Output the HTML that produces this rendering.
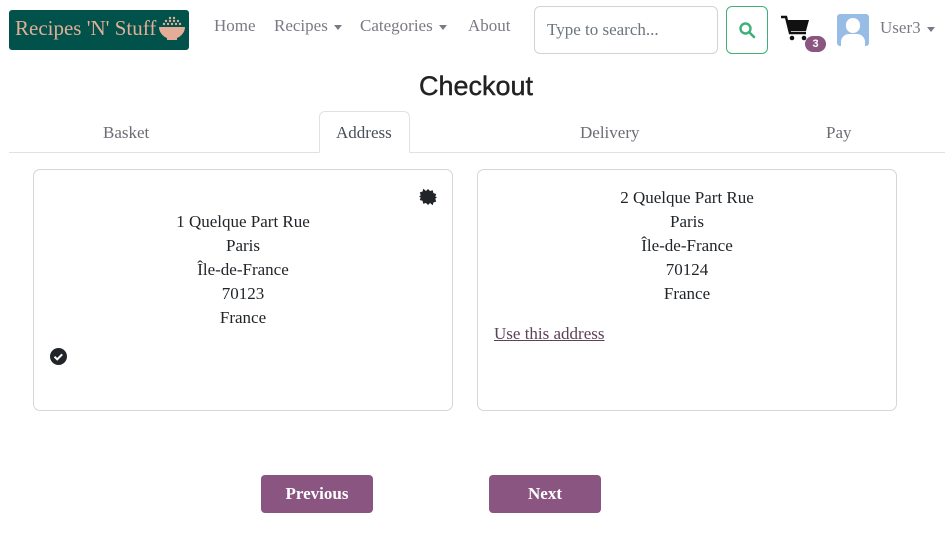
<!DOCTYPE html>
<html><head><style>
*{margin:0;padding:0;box-sizing:border-box}
body{width:952px;height:534px;background:#fff;font-family:"Liberation Serif",serif;color:#212529;position:relative;overflow:hidden;font-size:16px}
.a{position:absolute}
.nav{color:#7a7a85;font-size:17px;top:16px}
.car{display:inline-block;border-left:4px solid transparent;border-right:4px solid transparent;border-top:5px solid #7a7a85;vertical-align:middle;margin-left:6px}
.card{border:1px solid #d6d6d6;border-radius:7px;top:169px;width:420px;height:242px}
.addr{text-align:center;line-height:24px;font-size:17px}
.btn{background:#8b5581;color:#fff;border-radius:4px;width:112px;height:38px;top:475px;text-align:center;line-height:38px;font-size:17px;font-weight:bold}
.tab{top:123px;font-size:17px;color:#6c6c75}
</style></head><body>
<div class="a" style="left:9px;top:10px;width:180px;height:40px;background:#00524a;border-radius:3px"></div>
<div class="a" style="left:15px;top:16px;color:#e3ad97;font-size:21px">Recipes 'N' Stuff</div>
<svg class="a" style="left:159px;top:15px" width="26" height="28" viewBox="0 0 26 28"><g fill="#e3ad97"><circle cx="11" cy="3" r="1.2"/><circle cx="15" cy="3" r="1.2"/><circle cx="7" cy="6" r="1.2"/><circle cx="11" cy="6" r="1.2"/><circle cx="15" cy="6" r="1.2"/><circle cx="19" cy="6" r="1.2"/><circle cx="5" cy="9" r="1.2"/><circle cx="9" cy="9" r="1.2"/><circle cx="13" cy="9" r="1.2"/><circle cx="17" cy="9" r="1.2"/><circle cx="21" cy="9" r="1.2"/><path d="M0 12h26c0 6-5 10-8 11v2H8v-2C5 22 0 18 0 12z"/></g></svg>
<div class="a nav" style="left:214px">Home</div>
<div class="a nav" style="left:274px">Recipes<span class="car"></span></div>
<div class="a nav" style="left:360px">Categories<span class="car"></span></div>
<div class="a nav" style="left:468px">About</div>
<div class="a" style="left:534px;top:6px;width:184px;height:48px;border:1px solid #ced4da;border-radius:6px;padding:13px 12px;color:#6c757d;font-size:17px">Type to search...</div>
<div class="a" style="left:726px;top:6px;width:42px;height:48px;border:1px solid #3eb07a;border-radius:6px"></div>
<svg class="a" style="left:738px;top:21px" width="18" height="18" viewBox="0 0 18 18"><circle cx="7.5" cy="7.5" r="5" fill="none" stroke="#3eb07a" stroke-width="2.4"/><path d="M11 11l5 5" stroke="#3eb07a" stroke-width="2.6" stroke-linecap="round"/></svg>
<svg class="a" style="left:781px;top:15px" width="30" height="28" viewBox="0 0 30 28"><path d="M0 2h5l4 16h16" fill="none" stroke="#111" stroke-width="2.5"/><path d="M6 5h22l-3 11H9z" fill="#111"/><circle cx="11" cy="23" r="2.3" fill="#111"/><circle cx="23" cy="23" r="2.3" fill="#111"/></svg>
<div class="a" style="left:805px;top:36px;width:21px;height:16px;border-radius:8px;background:#8b5581;color:#fff;font-family:'Liberation Sans',sans-serif;font-weight:bold;font-size:11px;text-align:center;line-height:16px">3</div>
<div class="a" style="left:837px;top:14px;width:32px;height:32px;background:#97bde6;border-radius:3px;overflow:hidden">
<div class="a" style="left:9px;top:4px;width:14px;height:15px;border-radius:7px;background:#fff"></div>
<div class="a" style="left:4px;top:20px;width:24px;height:16px;border-radius:8px 8px 0 0;background:#fff"></div></div>
<div class="a nav" style="left:880px;top:18px">User3<span class="car"></span></div>
<div class="a" style="left:0;width:952px;top:71px;text-align:center;font-family:'Liberation Sans',sans-serif;font-size:27px;color:#222;-webkit-text-stroke:0.4px #222">Checkout</div>
<div class="a" style="left:9px;top:152px;width:936px;height:1px;background:#dee2e6"></div>
<div class="a" style="left:319px;top:111px;width:91px;height:42px;border:1px solid #dee2e6;border-bottom:1px solid #fff;border-radius:6px 6px 0 0;background:#fff"></div>
<div class="a tab" style="left:103px">Basket</div>
<div class="a tab" style="left:336px;color:#495057">Address</div>
<div class="a tab" style="left:580px">Delivery</div>
<div class="a tab" style="left:826px">Pay</div>
<div class="a card" style="left:33px"></div>
<div class="a card" style="left:477px"></div>
<svg class="a" style="left:419px;top:188px" width="18" height="18" viewBox="0 0 18 18"><path d="M9 1l2 2 2.8-.7.6 2.8 2.8.9-.9 2.8L18 9l-1.7 1.8.9 2.8-2.8.9-.6 2.8L11 15l-2 2-2-2-2.8.7-.6-2.8-2.8-.9.9-2.8L0 9l1.7-1.8-.9-2.8 2.8-.9.6-2.8L7 3z" fill="#212529"/></svg>
<div class="a addr" style="left:33px;width:420px;top:210px">1 Quelque Part Rue<br>Paris<br>Île-de-France<br>70123<br>France</div>
<svg class="a" style="left:50px;top:348px" width="17" height="17" viewBox="0 0 17 17"><circle cx="8.5" cy="8.5" r="8.5" fill="#212529"/><path d="M4.5 8.7l2.7 2.6 5-5" fill="none" stroke="#fff" stroke-width="2"/></svg>
<div class="a addr" style="left:477px;width:420px;top:186px">2 Quelque Part Rue<br>Paris<br>Île-de-France<br>70124<br>France</div>
<div class="a" style="left:494px;top:324px;color:#5c4158;text-decoration:underline;font-size:17px">Use this address</div>
<div class="a btn" style="left:261px">Previous</div>
<div class="a btn" style="left:489px">Next</div>
</body></html>
